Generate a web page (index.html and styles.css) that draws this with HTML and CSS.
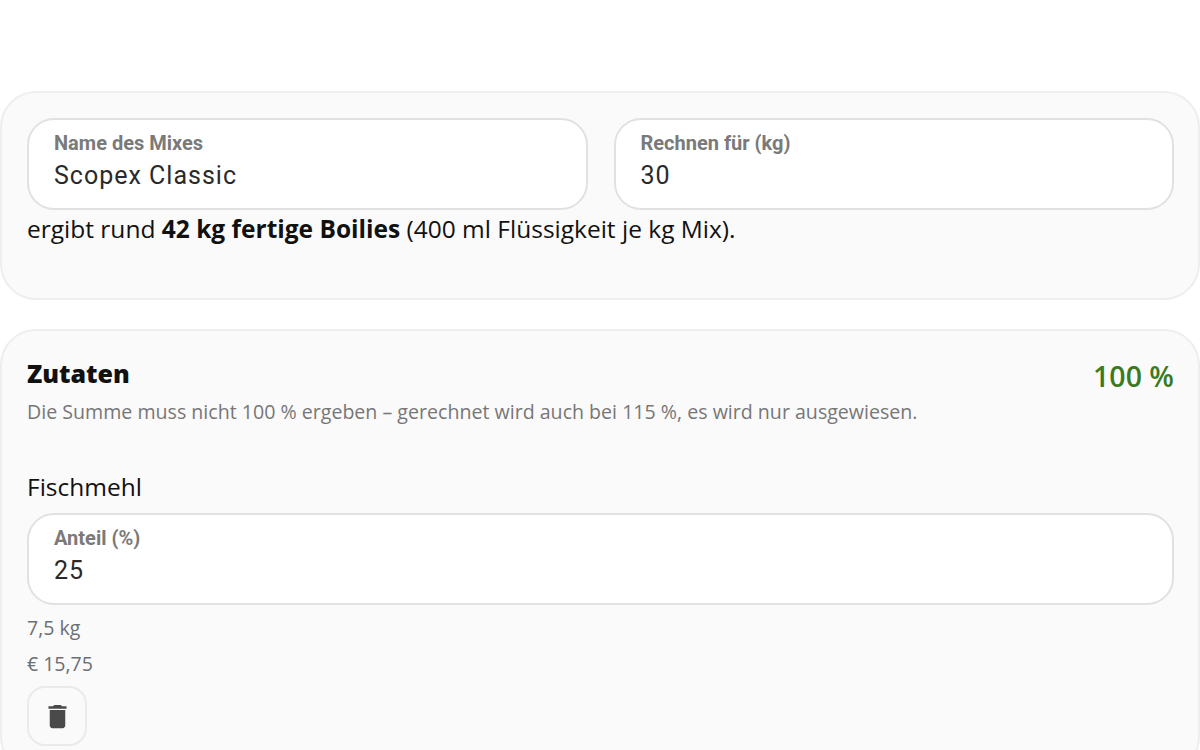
FILE: index.html
```html
<!DOCTYPE html>
<html lang="de">
<head>
    <meta charset="UTF-8">
    <title>Mix</title>
    <link rel="stylesheet" href="styles.css">
</head>
<body>
    <main class="page">
        <section class="card card-mix">
            <div class="field-row">
                <label class="field">
                    <span class="field-label">Name des Mixes</span>
                    <input class="field-input" type="text" value="Scopex Classic">
                </label>
                <label class="field">
                    <span class="field-label">Rechnen für (kg)</span>
                    <input class="field-input" type="text" value="30">
                </label>
            </div>
            <p class="yield">ergibt rund <strong>42 kg fertige Boilies</strong> (400 ml Flüssigkeit je kg Mix).</p>
        </section>

        <section class="card">
            <div class="card-head">
                <h2 class="card-title">Zutaten</h2>
                <span class="total">100 %</span>
            </div>
            <p class="hint">Die Summe muss nicht 100 % ergeben – gerechnet wird auch bei 115 %, es wird nur ausgewiesen.</p>

            <div class="ingredient">
                <div class="ingredient-name">Fischmehl</div>
                <label class="field">
                    <span class="field-label">Anteil (%)</span>
                    <input class="field-input" type="text" value="25">
                </label>
                <div class="meta meta-first">7,5 kg</div>
                <div class="meta">€ 15,75</div>
                <button class="icon-button" type="button" aria-label="Entfernen">
                    <svg viewBox="0 0 24 24" width="31" height="31"><path d="M6 19c0 1.1.9 2 2 2h8c1.100 0 2-.9 2-2V7H6v12zM19 4h-3.500l-1-1h-5l-1 1H5v2h14V4z"/></svg>
                </button>
            </div>
        </section>
    </main>
</body>
</html>
```

FILE: styles.css
```css
html, body {
    height: 100%;
    overflow: hidden;
}
body {
    margin: 0;
    background-color: #FFFFFF;
    color: #111111;
    font-family: 'Open Sans', 'Noto Sans', sans-serif;
}
.page {
    padding-top: 91px;
    display: flex;
    flex-direction: column;
    gap: 29px;
}
.card {
    background-color: #FAFAFA;
    border: 2px solid #EEEEEE;
    border-radius: 36px;
    padding: 25px 24px 25px 25px;
}
.card-mix {
    height: 209px;
    box-sizing: border-box;
}
.field-row {
    display: flex;
    gap: 26px;
}
.field {
    flex: 1;
    display: flex;
    flex-direction: column;
    box-sizing: border-box;
    height: 92px;
    padding: 11px 25px 0;
    background-color: #FFFFFF;
    border: 2px solid #E1E1E1;
    border-radius: 27px;
}
.field-label {
    font-family: Roboto, sans-serif;
    font-weight: 700;
    font-size: 20px;
    line-height: 24px;
    color: #7A7A7A;
}
.field-input {
    border: 0;
    outline: 0;
    padding: 0;
    margin-top: 6px;
    background: transparent;
    font-family: Roboto, sans-serif;
    font-size: 25px;
    line-height: 30px;
    letter-spacing: 1px;
    color: #2A2A2A;
    width: 100%;
}
.yield {
    margin: 3px 0 0;
    font-size: 24.500px;
    line-height: 32px;
}
.yield strong {
    font-weight: 700;
}
.card-head {
    display: flex;
    justify-content: space-between;
    align-items: flex-start;
}
.card-title {
    margin: 0;
    font-family: 'Noto Sans', sans-serif;
    font-size: 25px;
    line-height: 34px;
    font-weight: 900;
}
.total {
    font-size: 28.500px;
    line-height: 40px;
    font-weight: 600;
    color: #3B7A1E;
}
.hint {
    margin: 2px 0 0;
    font-size: 19.600px;
    line-height: 28px;
    color: #777777;
}
.ingredient {
    margin-top: 44px;
}
.ingredient-name {
    font-size: 24.500px;
    line-height: 34px;
    font-weight: 500;
    margin-bottom: 9px;
}
.meta {
    font-size: 19.500px;
    line-height: 28px;
    margin-top: 8px;
    color: #6B6F76;
}
.meta-first {
    margin-top: 9px;
}
.icon-button {
    display: flex;
    align-items: center;
    justify-content: center;
    width: 60px;
    height: 60px;
    margin-top: 8px;
    padding: 0;
    background: transparent;
    border: 2px solid #EAEAEA;
    border-radius: 18px;
}
.icon-button svg {
    fill: #4A4A4A;
}
```
